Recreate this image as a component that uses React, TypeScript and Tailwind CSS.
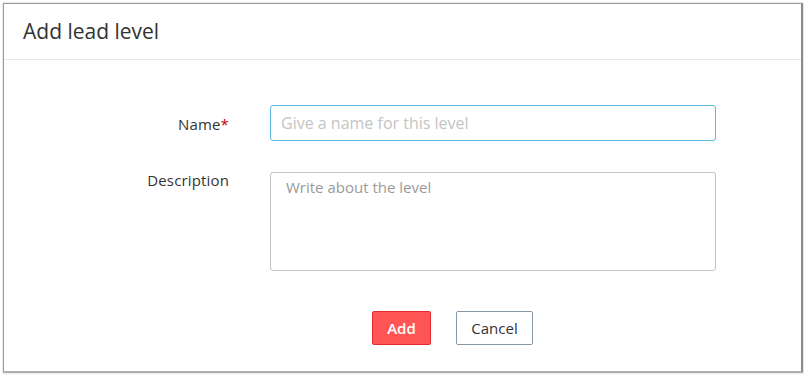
import React from "react";

export default function App() {
  return (
    <div className="w-[806px] h-[376px] bg-white p-[3px]" style={{ fontFamily: '"Open Sans", "Noto Sans", sans-serif' }}>
      <div className="w-[800px] h-[370px] border border-[#9a9a9a] border-r-2 border-r-[#8a8a8a] border-b-2 border-b-[#b0b0b0] bg-white flex flex-col shadow-[0_0_2px_rgba(0,0,0,0.25)]">
        <div className="h-[56px] border-b border-[#e8e8e8] flex items-center pl-[19px] shrink-0">
          <h1 className="text-[21px] text-[#333] leading-none">Add lead level</h1>
        </div>
        <div className="pt-[45px] flex flex-col">
          <div className="flex items-center h-[36px]">
            <div className="w-[225px] text-right text-[15px] tracking-[0.15px] text-[#333] pt-[2px]">
              Name<span className="text-[#c00]">*</span>
            </div>
            <input
              className="ml-[41px] w-[446px] h-[36px] border border-[#5bb8e0] rounded-[3px] px-[10px] text-[16px] text-[#333] placeholder:text-[#c4c4c4] outline-none"
              placeholder="Give a name for this level"
            />
          </div>
          <div className="flex items-start mt-[31px]">
            <div className="w-[225px] text-right text-[15px] tracking-[0.15px] text-[#333] leading-[16px]">
              Description
            </div>
            <textarea
              className="ml-[41px] w-[446px] h-[99px] border border-[#c4c4c4] rounded-[3px] px-[15px] pt-[3px] text-[15px] text-[#333] placeholder:text-[#9a9a9a] outline-none resize-none"
              placeholder="Write about the level"
            />
          </div>
          <div className="flex mt-[40px] pl-[368px] gap-[25px]">
            <button className="w-[59px] h-[34px] bg-[#ff5555] border border-[#e52a36] rounded-[2px] text-white text-[15px] font-semibold">
              Add
            </button>
            <button className="w-[77px] h-[34px] bg-white border border-[#8796ab] rounded-[2px] text-[#333] text-[15px]">
              Cancel
            </button>
          </div>
        </div>
      </div>
    </div>
  );
}
